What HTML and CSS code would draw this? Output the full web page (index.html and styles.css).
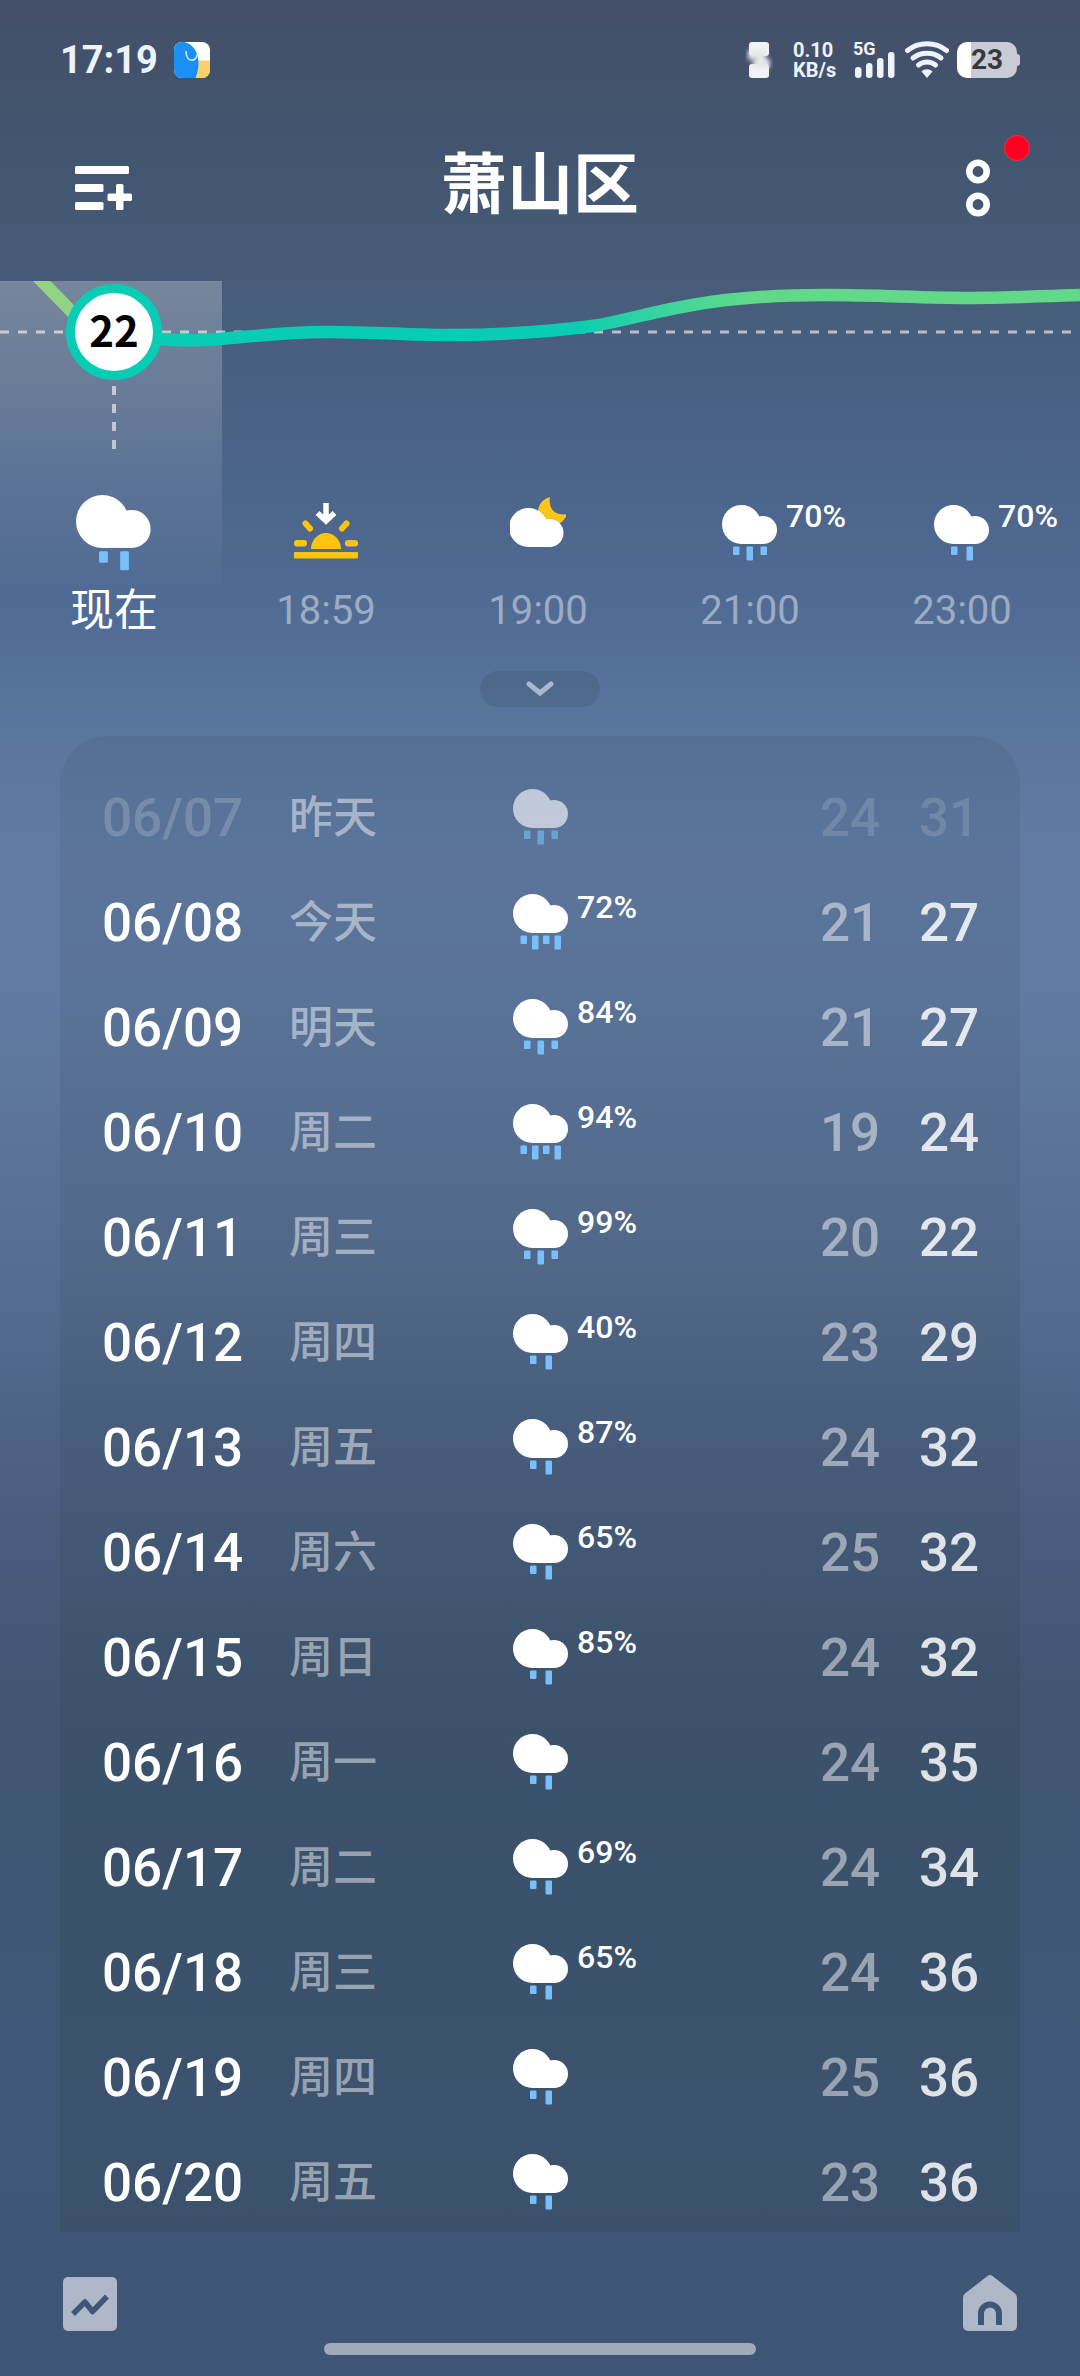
FILE: index.html
```html
<!DOCTYPE html>
<html lang="zh-CN">
<head>
<meta charset="utf-8">
<meta name="viewport" content="width=device-width, initial-scale=1">
<title>萧山区</title>
<link rel="stylesheet" href="styles.css">
</head>
<body>
<svg class="defs" aria-hidden="true">
  <symbol id="cloud" viewBox="0 0 56 56">
    <circle cx="19.5" cy="19.5" r="19.5" fill="#fff"/>
    <circle cx="41" cy="25" r="14" fill="#fff"/>
    <rect x="19.5" y="18" width="21.5" height="21" fill="#fff"/>
  </symbol>
  <symbol id="rain2" viewBox="0 0 56 56">
    <use href="#cloud"/>
    <g fill="#77c0fb"><rect x="17" y="41.500" width="6.500" height="8.500" rx="1"/><rect x="32.500" y="41.500" width="6.500" height="14" rx="1"/></g>
  </symbol>
  <symbol id="rain3" viewBox="0 0 56 56">
    <use href="#cloud"/>
    <g fill="#77c0fb"><rect x="11" y="41.500" width="6.500" height="8.500" rx="1"/><rect x="24.500" y="41.500" width="6.500" height="14" rx="1"/><rect x="38.500" y="41.500" width="6.500" height="8.500" rx="1"/></g>
  </symbol>
  <symbol id="rain4" viewBox="0 0 56 56">
    <use href="#cloud"/>
    <g fill="#77c0fb"><rect x="7.500" y="41.500" width="6.500" height="8.500" rx="1"/><rect x="19" y="41.500" width="6.500" height="14" rx="1"/><rect x="30" y="41.500" width="6.500" height="8.500" rx="1"/><rect x="41.500" y="41.500" width="6.500" height="14" rx="1"/></g>
  </symbol>
</svg>

<div class="app">
  <div class="status">
    <div class="status-side">
      <span class="clock">17:19</span>
      <svg class="app-badge" width="36" height="36" viewBox="0 0 36 36" aria-hidden="true">
        <clipPath id="badge"><rect width="36" height="36" rx="8"/></clipPath>
        <g clip-path="url(#badge)">
          <rect width="36" height="36" fill="#fff"/>
          <path d="M24 18.500h12V36H18z" fill="#f8d06c"/>
          <path d="M0 0h10c9 2 15 10 14.500 22-.2 6-1.500 10-3 14H0z" fill="#1890f8"/>
          <path d="M12 9c0 12 11 12 11.500 2" fill="none" stroke="#d8ecff" stroke-width="1.600"/>
        </g>
      </svg>
    </div>
    <div class="status-side">
      <svg class="vibrate" width="28" height="36" viewBox="0 0 28 36" aria-hidden="true">
        <defs><filter id="soft" x="-30%" y="-30%" width="160%" height="160%"><feGaussianBlur stdDeviation="2"/></filter></defs>
        <rect x="4" width="20" height="14" rx="3" fill="#f2f3f5"/><rect x="4" y="22" width="20" height="14" rx="3" fill="#f2f3f5"/>
        <g filter="url(#soft)"><path d="M3 8h18v9H3z" fill="#e6e8ea"/><path d="M8 17h17v9H8z" fill="#e6e8ea"/><path d="M4 16h8v3H4z" fill="#a9aeb6"/></g>
      </svg>
      <span class="speed"><span>0.10</span><span>KB/s</span></span>
      <span class="signal">
        <span>5G</span>
        <svg width="40" height="26" viewBox="0 0 40 26" fill="#eef2fb" aria-hidden="true"><rect y="15" width="6.500" height="11" rx="3"/><rect x="11" y="11" width="6.500" height="15" rx="3"/><rect x="22" y="6" width="6.500" height="20" rx="3"/><rect x="33" width="6.500" height="26" rx="3"/></svg>
      </span>
      <svg class="wifi" width="44" height="38" viewBox="0 0 44 38" fill="none" stroke="#eef2fb" stroke-width="5" stroke-linecap="round" aria-hidden="true">
        <path d="M2.500 9.500c11-9 28-9 39 0"/><path d="M8 17c8-6.500 20-6.500 28 0"/><path d="M13.500 24c5-4 12-4 17 0"/>
        <path d="M22 37l-5.500-6.500c3-3 8-3 11 0z" fill="#eef2fb" stroke="none"/>
      </svg>
      <span class="battery">23</span>
    </div>
  </div>

  <header class="topbar">
    <button class="icon-btn" aria-label="城市管理">
      <svg width="60" height="46" viewBox="0 0 60 46" fill="#fff" aria-hidden="true"><rect x="3" y="1" width="54" height="8" rx="1.500"/><rect x="3" y="19" width="28.500" height="8" rx="1.500"/><rect x="3" y="37" width="28.500" height="8" rx="1.500"/><rect x="35.500" y="28.500" width="24.500" height="7.500" rx="1.500"/><rect x="44" y="19" width="7.500" height="26" rx="1.500"/></svg>
    </button>
    <h1>萧山区</h1>
    <button class="icon-btn more" aria-label="更多">
      <svg width="24" height="58" viewBox="0 0 24 58" fill="none" stroke="#fff" stroke-width="6.500" aria-hidden="true"><circle cx="12" cy="12.500" r="8.700"/><circle cx="12" cy="45.500" r="8.700"/></svg>
      <span class="dot"></span>
    </button>
  </header>

  <main>
    <section class="hourly" aria-label="逐小时预报">
      <svg class="curve" width="1080" height="200" viewBox="0 0 1080 200" aria-hidden="true">
        <defs>
          <linearGradient id="line" gradientUnits="userSpaceOnUse" x1="0" y1="0" x2="1080" y2="0">
            <stop offset="0" stop-color="#a2d27c"/><stop offset=".065" stop-color="#8fd486"/><stop offset=".1" stop-color="#08ccb4"/><stop offset=".53" stop-color="#08ccb4"/><stop offset=".63" stop-color="#44d69a"/><stop offset=".7" stop-color="#62d988"/><stop offset="1" stop-color="#62d988"/>
          </linearGradient>
        </defs>
        <path d="M0 51H1080" stroke="#fff" stroke-opacity=".6" stroke-width="3" stroke-dasharray="9 9"/>
        <path d="M114 105v63" stroke="#fff" stroke-opacity=".6" stroke-width="4" stroke-dasharray="9 9"/>
        <path d="M30 -12L75 34C105 52 150 60 193 59.500C240 58 270 51 327 51C375 51 405 54 448 54C500 54 540 52 592 45C650 36 690 14 826 14C880 14 920 17 970 17C1010 17 1040 15 1080 14" fill="none" stroke="url(#line)" stroke-width="12.500"/>
        <circle cx="114" cy="51" r="43.500" fill="#fff" stroke="#08ccb4" stroke-width="9"/>
        <text x="114" y="66" text-anchor="middle" class="now-temp">22</text>
      </svg>
      <ul class="hours">
        <li class="now"><span class="hour-icon"><svg width="76" height="76"><use href="#rain2"/></svg></span><span class="hour-label">现在</span></li>
        <li><span class="hour-icon">
          <svg width="64" height="60" viewBox="0 0 64 60" aria-hidden="true">
            <g fill="#fcc40e"><path d="M17 46a15 16 0 0 1 30 0z"/><rect y="49" width="64" height="6.500" rx="1"/><rect y="37" width="13" height="6.500" rx="3"/><rect x="51" y="37" width="13" height="6.500" rx="3"/></g>
            <path d="M11.500 20.500l4.500 5M52.500 20.500l-4.500 5" stroke="#fcc40e" stroke-width="6" stroke-linecap="round"/>
            <path d="M32 0v16M23.500 10l8.500 8 8.500-8" fill="none" stroke="#fff" stroke-width="5.500"/>
          </svg></span><span class="hour-label">18:59</span></li>
        <li><span class="hour-icon">
          <svg width="56" height="74" viewBox="2 0 56 74" aria-hidden="true">
            <path d="M42 1C31 4 28 14 31 24l14 5C52 29 56 25 59.500 18C48 20 40 14 42 1z" fill="#f9c41c"/>
            <circle cx="20.500" cy="31.500" r="19.500" fill="#fff"/><circle cx="41.500" cy="37" r="14" fill="#fff"/><path d="M20 32h22v19H20z" fill="#fff"/>
          </svg></span><span class="hour-label">19:00</span></li>
        <li><span class="hour-icon"><svg width="56" height="56"><use href="#rain3"/></svg><span class="hour-chance">70%</span></span><span class="hour-label">21:00</span></li>
        <li><span class="hour-icon"><svg width="56" height="56"><use href="#rain2"/></svg><span class="hour-chance">70%</span></span><span class="hour-label">23:00</span></li>
      </ul>
    </section>

    <button class="expand" aria-label="展开">
      <svg width="28" height="16" viewBox="0 0 28 16" fill="none" aria-hidden="true"><path d="M3 3l11 9 11-9" stroke="#aab8cd" stroke-width="5" stroke-linecap="round"/></svg>
    </button>

    <section class="daily" aria-label="每日预报">
      <table>
        <colgroup><col class="c-date"><col class="c-day"><col><col class="c-low"><col class="c-high"></colgroup>
        <tbody>
          <tr class="past"><th scope="row">06/07</th><td class="day">昨天</td><td><span class="sky"><svg><use href="#rain3"/></svg></span></td><td class="low">24</td><td class="high">31</td></tr>
          <tr><th scope="row">06/08</th><td class="day">今天</td><td><span class="sky"><svg><use href="#rain4"/></svg><span>72%</span></span></td><td class="low">21</td><td class="high">27</td></tr>
          <tr><th scope="row">06/09</th><td class="day">明天</td><td><span class="sky"><svg><use href="#rain3"/></svg><span>84%</span></span></td><td class="low">21</td><td class="high">27</td></tr>
          <tr><th scope="row">06/10</th><td class="day">周二</td><td><span class="sky"><svg><use href="#rain4"/></svg><span>94%</span></span></td><td class="low">19</td><td class="high">24</td></tr>
          <tr><th scope="row">06/11</th><td class="day">周三</td><td><span class="sky"><svg><use href="#rain3"/></svg><span>99%</span></span></td><td class="low">20</td><td class="high">22</td></tr>
          <tr><th scope="row">06/12</th><td class="day">周四</td><td><span class="sky"><svg><use href="#rain2"/></svg><span>40%</span></span></td><td class="low">23</td><td class="high">29</td></tr>
          <tr><th scope="row">06/13</th><td class="day">周五</td><td><span class="sky"><svg><use href="#rain2"/></svg><span>87%</span></span></td><td class="low">24</td><td class="high">32</td></tr>
          <tr><th scope="row">06/14</th><td class="day">周六</td><td><span class="sky"><svg><use href="#rain2"/></svg><span>65%</span></span></td><td class="low">25</td><td class="high">32</td></tr>
          <tr><th scope="row">06/15</th><td class="day">周日</td><td><span class="sky"><svg><use href="#rain2"/></svg><span>85%</span></span></td><td class="low">24</td><td class="high">32</td></tr>
          <tr><th scope="row">06/16</th><td class="day">周一</td><td><span class="sky"><svg><use href="#rain2"/></svg></span></td><td class="low">24</td><td class="high">35</td></tr>
          <tr><th scope="row">06/17</th><td class="day">周二</td><td><span class="sky"><svg><use href="#rain2"/></svg><span>69%</span></span></td><td class="low">24</td><td class="high">34</td></tr>
          <tr><th scope="row">06/18</th><td class="day">周三</td><td><span class="sky"><svg><use href="#rain2"/></svg><span>65%</span></span></td><td class="low">24</td><td class="high">36</td></tr>
          <tr><th scope="row">06/19</th><td class="day">周四</td><td><span class="sky"><svg><use href="#rain2"/></svg></span></td><td class="low">25</td><td class="high">36</td></tr>
          <tr><th scope="row">06/20</th><td class="day">周五</td><td><span class="sky"><svg><use href="#rain2"/></svg></span></td><td class="low">23</td><td class="high">36</td></tr>
        </tbody>
      </table>
    </section>
  </main>

  <footer>
    <nav aria-label="底部导航">
      <a href="#trend" aria-label="趋势"><svg width="54" height="56" viewBox="0 0 54 56" aria-hidden="true">
        <mask id="m1"><rect width="54" height="56" fill="#fff"/><path d="M10 39L22 27l7.500 9.500L44 21.500" fill="none" stroke="#000" stroke-width="5.500" stroke-linejoin="round"/></mask>
        <rect y="2" width="54" height="54" rx="5" fill="#fff" fill-opacity=".58" mask="url(#m1)"/></svg></a>
      <a href="#home" aria-label="首页"><svg width="54" height="56" viewBox="0 0 54 56" aria-hidden="true">
        <mask id="m2"><rect width="54" height="56" fill="#fff"/><path d="M18 50V38.500a9 9 0 0 1 18 0V50" fill="none" stroke="#000" stroke-width="6"/></mask>
        <path d="M24.500 1Q27-.8 29.500 1L52 18.500Q54 20 54 23V51a5 5 0 0 1-5 5H5a5 5 0 0 1-5-5V23Q0 20 2 18.500z" fill="#fff" fill-opacity=".58" mask="url(#m2)"/></svg></a>
    </nav>
    <div class="home-bar"></div>
  </footer>
</div>
</body>
</html>
```
FILE: styles.css
```css
* { box-sizing: border-box; }

body {
  margin: 0;
  color: #fff;
  font-family: Roboto, "Noto Sans CJK SC", sans-serif;
}

button {
  border: 0;
  padding: 0;
  background: none;
  color: inherit;
  font: inherit;
}

svg { display: block; flex: none; }

.defs { position: absolute; width: 0; height: 0; }

.app {
  display: flex;
  flex-direction: column;
  height: 100vh;
  background: linear-gradient(#434f69 0%, #42566f 7%, #475c7a 12%, #4b648a 20%, #4f6a93 25%, #58759c 30%, #627ba5 36%, #607aa3 42%, #576e92 53%, #4c6184 61%, #415673 71%, #3f5674 80%, #415778 88%, #3f5576 100%);
}

/* status bar */
.status {
  display: flex;
  flex: none;
  justify-content: space-between;
  align-items: center;
  height: 100px;
  padding: 20px 60px 0;
}

.status-side { display: flex; align-items: center; }

.clock {
  font-size: 38px;
  font-weight: 700;
  line-height: 40px;
  color: #eef2fb;
}

.app-badge { margin-left: 16px; }

.speed {
  display: flex;
  flex-direction: column;
  width: 44px;
  margin: 0 16px 0 20px;
  font-size: 20px;
  font-weight: 700;
  line-height: 20px;
  color: #eef2fb;
}

.signal {
  display: flex;
  flex-direction: column;
  height: 38px;
  font-size: 18px;
  font-weight: 700;
  line-height: 16px;
  color: #eef2fb;
}

.signal svg { margin: -5px 0 0 2px; }

.wifi { margin: 0 8px 0 10px; }

.battery {
  position: relative;
  width: 60px;
  height: 36px;
  margin-right: 3px;
  border-radius: 10px;
  background: linear-gradient(90deg, #fff 14px, #c7ccd6 14px);
  color: #38393c;
  font-size: 28px;
  font-weight: 700;
  line-height: 36px;
  text-align: center;
}

.battery::after {
  content: "";
  position: absolute;
  top: 12px;
  left: 100%;
  width: 3px;
  height: 12px;
  border-radius: 0 3px 3px 0;
  background: #c7ccd6;
}

/* title bar */
.topbar {
  display: grid;
  flex: none;
  grid-template-columns: 60px 1fr 60px;
  align-items: center;
  height: 181px;
  padding: 0 72px 5px;
}

.topbar h1 {
  margin: 0;
  padding-bottom: 4px;
  font-size: 66px;
  font-weight: 700;
  line-height: 80px;
  text-align: center;
}

.icon-btn { position: relative; }

.more { justify-self: end; padding: 0 18px; }

.dot {
  position: absolute;
  top: -24px;
  right: -22px;
  width: 26px;
  height: 26px;
  border: 1px solid #f02c44;
  border-radius: 50%;
  background: #ff0020;
}

main { flex: 1; min-height: 0; overflow: hidden; }

/* hourly forecast */
.hourly {
  overflow: hidden;
  background: linear-gradient(rgba(255, 255, 255, .26), rgba(255, 255, 255, 0)) 0 0 / 222px 320px no-repeat;
}

.now-temp {
  font-family: "Noto Sans CJK SC", sans-serif;
  font-size: 42px;
  font-weight: 700;
  fill: #000;
}

.hours {
  display: flex;
  margin: 0;
  padding: 0 8px;
  list-style: none;
}

.hours li {
  display: flex;
  flex: none;
  flex-direction: column;
  align-items: center;
  width: 212px;
}

.hour-icon {
  display: flex;
  position: relative;
  align-items: center;
  height: 104px;
}

.hour-chance {
  position: absolute;
  top: 22px;
  left: 100%;
  padding-left: 8px;
  font-size: 32px;
  font-weight: 500;
  line-height: 26px;
}

.hour-label {
  font-size: 40px;
  line-height: 52px;
  color: rgba(255, 255, 255, .45);
}

.now .hour-label { font-size: 44px; color: #fff; }

.expand {
  display: flex;
  justify-content: center;
  align-items: center;
  width: 120px;
  height: 36px;
  margin: 34px auto 29px;
  border-radius: 18px;
  background: rgba(50, 80, 100, .25);
}

/* daily forecast */
.daily {
  margin: 0 60px;
  padding: 29px 42px;
  border-radius: 48px 48px 0 0;
  background: linear-gradient(rgba(30, 50, 60, .09), rgba(22, 45, 30, .13));
}

.daily table {
  width: 100%;
  border-collapse: collapse;
  table-layout: fixed;
}

.c-date { width: 187px; }
.c-day { width: 224px; }
.c-low { width: 99px; }
.c-high { width: 59px; }

.daily th,
.daily td {
  height: 105px;
  padding: 0;
  font-size: 53px;
  font-weight: 500;
  line-height: 60px;
  text-align: left;
  white-space: nowrap;
}

.daily .day {
  font-size: 44px;
  font-weight: 500;
  color: rgba(255, 255, 255, .47);
}

.daily .low { color: rgba(255, 255, 255, .48); }
.daily .high { color: rgba(255, 255, 255, .84); }

.sky {
  display: flex;
  align-items: flex-start;
  gap: 8px;
  padding-bottom: 2px;
}

.sky svg { width: 56px; height: 56px; }

.sky span {
  font-size: 32px;
  font-weight: 500;
  line-height: 26px;
}

.daily .past th { color: rgba(255, 255, 255, .18); }
.past .sky { opacity: .62; }
.daily .past .low,
.daily .past .high { color: rgba(255, 255, 255, .15); }

/* bottom bar */
footer { flex: none; height: 144px; padding: 43px 63px 0; }

nav { display: flex; justify-content: space-between; }

.home-bar {
  width: 432px;
  max-width: 60%;
  height: 12px;
  margin: 12px auto 0;
  border-radius: 6px;
  background: rgba(255, 255, 255, .5);
}
```
